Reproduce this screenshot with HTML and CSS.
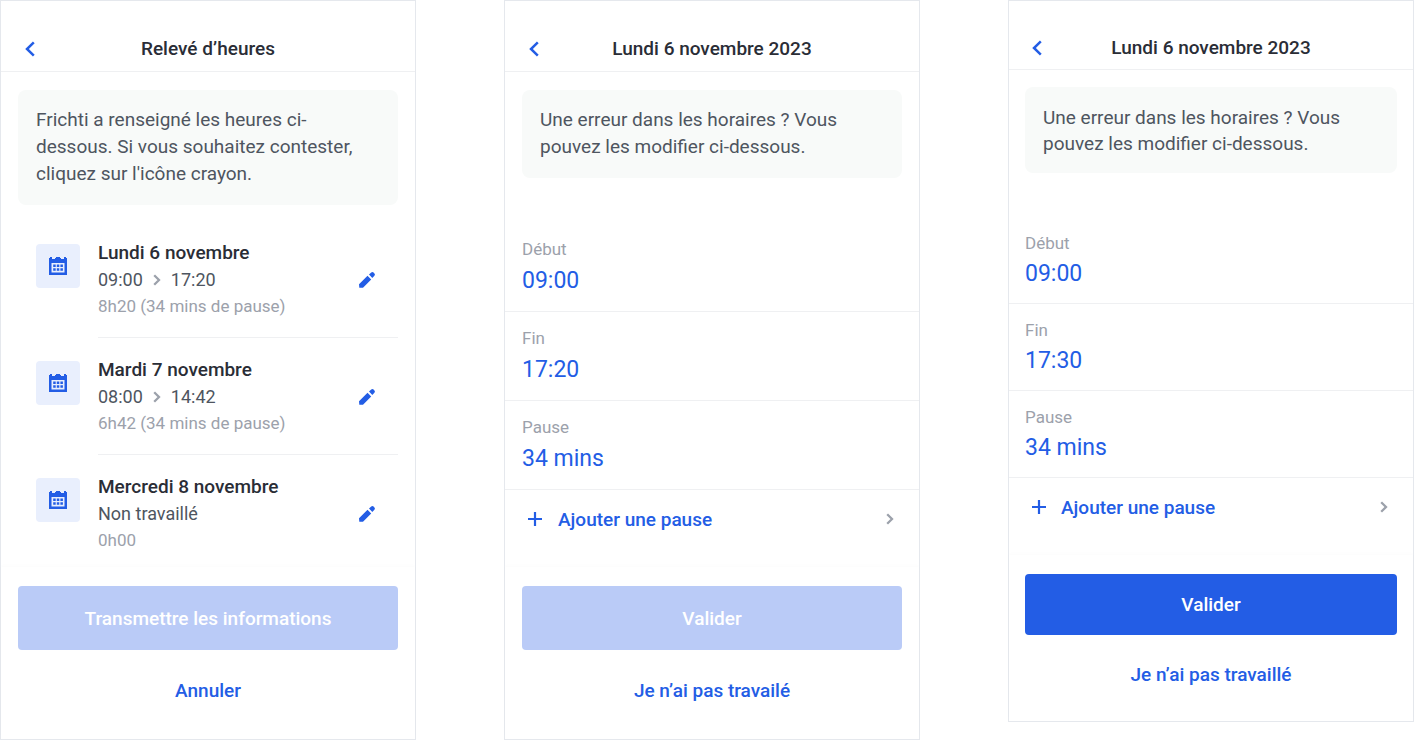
FILE: index.html
```html
<!DOCTYPE html>
<html lang="fr">
<head>
<meta charset="utf-8">
<meta name="viewport" content="width=device-width, initial-scale=1">
<title>Relevé d’heures</title>
<link rel="stylesheet" href="styles.css">
</head>
<body>
<svg class="sprite" aria-hidden="true">
  <symbol id="back" viewBox="0 0 10 16"><path d="M8.800 1.300 2 8l6.800 6.700" fill="none" stroke="currentColor" stroke-width="2.500"/></symbol>
  <symbol id="next" viewBox="0 0 8 12"><path d="M1.200 1.200 6 6l-4.800 4.800" fill="none" stroke="currentColor" stroke-width="2.300"/></symbol>
  <symbol id="plus" viewBox="0 0 14 14"><path d="M7 0v14M0 7h14" fill="none" stroke="currentColor" stroke-width="2.200"/></symbol>
  <symbol id="calendar" viewBox="0 0 18 18"><path fill="currentColor" fill-rule="evenodd" d="M0 1h1V0h2v2h3V1h1V0h4v1h1v1h3V0h2v1h1v17H0zM2.500 6v9.500h13V6z"/><path fill="currentColor" d="M4.200 7.500h2.500V10H4.200zM7.800 7.500h2.500V10H7.800zM11.400 7.500h2.500V10h-2.500zM4.200 11.200h2.500v2.500H4.200zM7.800 11.200h2.500v2.500H7.800zM11.400 11.200h2.500v2.500h-2.500z"/></symbol>
  <symbol id="pencil" viewBox="0 0 16 16"><path fill="currentColor" d="M0 12.200 8.500 3.800l3.700 3.700L4 15.700H.3zM10 2.600 12.200.6q1.200-1 2.400 0l.8.800q1 1.200 0 2.400l-2.100 2.100z"/></symbol>
</svg>
<main class="screens">
  <section class="screen">
    <header class="bar">
      <button class="bar-back" type="button" aria-label="Retour"><svg><use href="#back"/></svg></button>
      <h1 class="bar-title">Relevé d’heures</h1>
    </header>
    <p class="note">Frichti a renseigné les heures ci-dessous. Si vous souhaitez contester, cliquez sur l'icône crayon.</p>
    <ul class="days">
      <li class="day">
        <span class="day-icon"><svg><use href="#calendar"/></svg></span>
        <div class="day-body">
          <div>
            <h2 class="day-title">Lundi 6 novembre</h2>
            <p class="day-hours">09:00 <svg><use href="#next"/></svg> 17:20</p>
            <p class="day-total">8h20 (34 mins de pause)</p>
          </div>
          <button class="day-edit" type="button" aria-label="Modifier lundi 6 novembre"><svg><use href="#pencil"/></svg></button>
        </div>
      </li>
      <li class="day">
        <span class="day-icon"><svg><use href="#calendar"/></svg></span>
        <div class="day-body">
          <div>
            <h2 class="day-title">Mardi 7 novembre</h2>
            <p class="day-hours">08:00 <svg><use href="#next"/></svg> 14:42</p>
            <p class="day-total">6h42 (34 mins de pause)</p>
          </div>
          <button class="day-edit" type="button" aria-label="Modifier mardi 7 novembre"><svg><use href="#pencil"/></svg></button>
        </div>
      </li>
      <li class="day">
        <span class="day-icon"><svg><use href="#calendar"/></svg></span>
        <div class="day-body">
          <div>
            <h2 class="day-title">Mercredi 8 novembre</h2>
            <p class="day-hours">Non travaillé</p>
            <p class="day-total">0h00</p>
          </div>
          <button class="day-edit" type="button" aria-label="Modifier mercredi 8 novembre"><svg><use href="#pencil"/></svg></button>
        </div>
      </li>
    </ul>
    <footer class="actions">
      <button class="primary" type="button" disabled>Transmettre les informations</button>
      <button class="secondary" type="button">Annuler</button>
    </footer>
  </section>

  <section class="screen">
    <header class="bar">
      <button class="bar-back" type="button" aria-label="Retour"><svg><use href="#back"/></svg></button>
      <h1 class="bar-title">Lundi 6 novembre 2023</h1>
    </header>
    <p class="note">Une erreur dans les horaires ? Vous pouvez les modifier ci-dessous.</p>
    <form class="fields">
      <div class="field"><label for="start-a">Début</label><input id="start-a" type="text" value="09:00"></div>
      <div class="field"><label for="end-a">Fin</label><input id="end-a" type="text" value="17:20"></div>
      <div class="field"><label for="break-a">Pause</label><input id="break-a" type="text" value="34 mins"></div>
      <button class="add" type="button"><svg class="add-plus"><use href="#plus"/></svg><span>Ajouter une pause</span><svg class="add-next"><use href="#next"/></svg></button>
    </form>
    <footer class="actions">
      <button class="primary" type="button" disabled>Valider</button>
      <button class="secondary" type="button">Je n’ai pas travailé</button>
    </footer>
  </section>

  <section class="screen compact">
    <header class="bar">
      <button class="bar-back" type="button" aria-label="Retour"><svg><use href="#back"/></svg></button>
      <h1 class="bar-title">Lundi 6 novembre 2023</h1>
    </header>
    <p class="note">Une erreur dans les horaires ? Vous pouvez les modifier ci-dessous.</p>
    <form class="fields">
      <div class="field"><label for="start-b">Début</label><input id="start-b" type="text" value="09:00"></div>
      <div class="field"><label for="end-b">Fin</label><input id="end-b" type="text" value="17:30"></div>
      <div class="field"><label for="break-b">Pause</label><input id="break-b" type="text" value="34 mins"></div>
      <button class="add" type="button"><svg class="add-plus"><use href="#plus"/></svg><span>Ajouter une pause</span><svg class="add-next"><use href="#next"/></svg></button>
    </form>
    <footer class="actions">
      <button class="primary" type="button">Valider</button>
      <button class="secondary" type="button">Je n’ai pas travaillé</button>
    </footer>
  </section>
</main>
</body>
</html>
```
FILE: styles.css
```css
:root {
  --blue: #235de5;
  --ink: #2a2d36;
  --text: #4e5560;
  --muted: #9ca1ab;
  --line: #eff0f2;
  --frame: #e5e8ed;
}

* { box-sizing: border-box; }

body {
  margin: 0;
  background: #fff;
  color: var(--text);
  font-family: Roboto, "Liberation Sans", sans-serif;
  font-size: 19px;
}

h1, h2, p, ul { margin: 0; padding: 0; }

button, input {
  padding: 0;
  border: 0;
  background: none;
  font: inherit;
  color: var(--blue);
}

button { cursor: pointer; }
svg { display: block; }
.sprite { position: absolute; width: 0; height: 0; }

.screens {
  display: grid;
  grid-template-columns: 416fr 416fr 406fr;
  align-items: start;
  gap: 88px;
}

.screen {
  --side: 17px;
  --leading: 27px;
  --bar: 71px;
  --bar-end: 9px;
  --note-gap: 18px;
  --note-pad: 16px 18px 18px;
  --fields-gap: 45px;
  --field-end: 14px;
  --add: 58px;
  --add-gap: 19px;
  --plus-gap: 16px;
  --button: 64px;
  --link: 80px;
  --tail: 9px;
  border: 1px solid var(--frame);
}

.compact {
  --side: 16px;
  --leading: 26px;
  --bar: 69px;
  --bar-end: 8px;
  --note-gap: 17px;
  --note-pad: 18px 18px 16px;
  --fields-gap: 44px;
  --field-end: 13px;
  --plus-gap: 15px;
  --button: 61px;
  --link: 78px;
  --tail: 8px;
}

.bar {
  display: grid;
  grid-template-columns: 24px 1fr 24px;
  align-items: end;
  height: var(--bar);
  padding: 0 var(--side) var(--bar-end);
  border-bottom: 1px solid var(--line);
}

.bar-back { display: grid; place-items: center; width: 24px; height: 27px; }
.bar-back svg { width: 10px; height: 16px; }

.bar-title {
  color: var(--ink);
  font-size: 19px;
  font-weight: 500;
  line-height: 27px;
  text-align: center;
}

.note {
  margin: var(--note-gap) var(--side) 0;
  padding: var(--note-pad);
  border-radius: 8px;
  background: #f8faf9;
  line-height: var(--leading);
}

.days { padding: 16px var(--side) 0 35px; list-style: none; }

.day { display: flex; gap: 18px; }

.day-icon {
  display: grid;
  place-items: center;
  width: 44px;
  height: 44px;
  margin-top: 23px;
  border-radius: 4px;
  background: #e9effd;
  color: var(--blue);
}

.day-icon svg { width: 18px; height: 18px; }

.day-body {
  display: flex;
  flex: 1;
  align-items: center;
  justify-content: space-between;
  padding: 18px 19px 17px 0;
  border-bottom: 1px solid var(--line);
  line-height: 27px;
}

.day:last-child .day-body { border-bottom: 0; padding-bottom: 13px; }
.day-title { color: var(--ink); font-size: 19px; font-weight: 500; }
.day-hours { display: flex; align-items: center; gap: 8px; font-size: 18px; }
.day-hours svg { width: 12px; height: 12px; color: var(--muted); }
.day-total { color: var(--muted); font-size: 17px; }
.day-edit { display: grid; place-items: center; width: 24px; height: 24px; }
.day-edit svg { width: 16px; height: 16px; }

.fields { padding-top: var(--fields-gap); }

.field {
  display: flex;
  flex-direction: column;
  padding: 13px var(--side) var(--field-end);
  border-bottom: 1px solid var(--line);
}

.field label { color: var(--muted); font-size: 17px; line-height: var(--leading); }
.field input { width: 100%; height: 34px; font-size: 23px; }

.add {
  display: flex;
  align-items: center;
  width: 100%;
  height: var(--add);
  margin-bottom: var(--add-gap);
  padding: 0 25px 0 23px;
  font-weight: 500;
}

.add-plus { width: 14px; height: 14px; margin-right: var(--plus-gap); }
.add-next { width: 8px; height: 12px; margin-left: auto; color: var(--muted); }

.actions {
  display: flex;
  flex-direction: column;
  padding: 19px var(--side) var(--tail);
  box-shadow: 0 -2px 3px rgb(0 0 0 / 1%);
}

.primary {
  height: var(--button);
  border-radius: 4px;
  background: var(--blue);
  color: #fff;
  font-weight: 500;
}

.primary:disabled { background: #bacbf7; cursor: default; }
.secondary { height: var(--link); font-weight: 500; }
```
